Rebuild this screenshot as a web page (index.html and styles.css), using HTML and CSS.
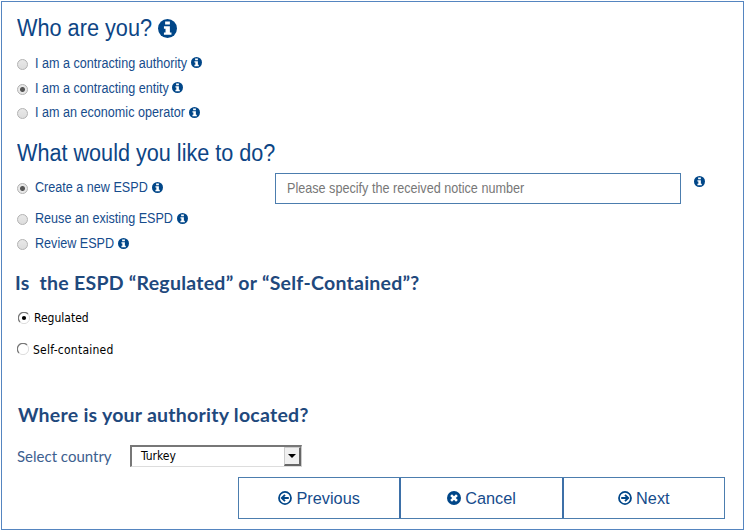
FILE: index.html
```html
<!DOCTYPE html>
<html lang="en">
<head>
<meta charset="utf-8">
<title>ESPD</title>
<link rel="stylesheet" href="styles.css">
</head>
<body>
<svg class="defs" width="0" height="0" aria-hidden="true">
  <symbol id="info" viewBox="0 0 24 24"><circle cx="12" cy="12" r="12" fill="#004688"/><path d="M9 3h6v4H9zM7.5 9.2H15v7.8h2v3H7.5v-3h2v-4.8h-2z" fill="#fff"/></symbol>
  <symbol id="arrow" viewBox="0 0 24 24"><circle cx="12" cy="12" r="10.3" fill="none" stroke="#004688" stroke-width="3"/><path d="M5.500 12h12M12 6.500L17.500 12 12 17.500" fill="none" stroke="#004688" stroke-width="3.200"/></symbol>
  <symbol id="cross" viewBox="0 0 24 24"><circle cx="12" cy="12" r="12" fill="#004688"/><path d="M7 7l10 10M17 7L7 17" stroke="#fff" stroke-width="4.400"/></symbol>
</svg>
<main class="frame">
  <h2 class="title title-who"><span class="text who">Who are you?</span><svg class="info-lg"><use href="#info"/></svg></h2>
  <div class="options">
    <label class="option"><i class="radio"></i><span class="text authority">I am a contracting authority</span><svg class="info"><use href="#info"/></svg></label>
    <label class="option"><i class="radio on"></i><span class="text entity">I am a contracting entity</span><svg class="info"><use href="#info"/></svg></label>
    <label class="option"><i class="radio"></i><span class="text operator">I am an economic operator</span><svg class="info"><use href="#info"/></svg></label>
  </div>
  <h2 class="title title-what"><span class="text what">What would you like to do?</span></h2>
  <div class="create-row">
    <label class="option"><i class="radio on"></i><span class="text create">Create a new ESPD</span><svg class="info"><use href="#info"/></svg></label>
    <div class="notice"><span class="text notice-text">Please specify the received notice number</span></div>
    <svg class="info notice-info"><use href="#info"/></svg>
  </div>
  <label class="option"><i class="radio"></i><span class="text reuse">Reuse an existing ESPD</span><svg class="info"><use href="#info"/></svg></label>
  <label class="option"><i class="radio"></i><span class="text review">Review ESPD</span><svg class="info"><use href="#info"/></svg></label>
  <h3 class="question regulated-q"><span class="text">Is&nbsp; the ESPD “Regulated” or “Self-Contained”?</span></h3>
  <label class="classic"><svg class="bevel" viewBox="0 0 12 12"><path d="M2 10A5.200 5.200 0 0 1 10 2" fill="none" stroke="#777" stroke-width="1.300"/><path d="M10 2A5.200 5.200 0 0 1 2 10" fill="none" stroke="#ddd"/><circle cx="6" cy="6" r="2.100" fill="#000"/></svg><span>Regulated</span></label>
  <label class="classic classic-self"><svg class="bevel" viewBox="0 0 12 12"><path d="M2 10A5.200 5.200 0 0 1 10 2" fill="none" stroke="#777" stroke-width="1.300"/><path d="M10 2A5.200 5.200 0 0 1 2 10" fill="none" stroke="#ddd"/></svg><span>Self-contained</span></label>
  <h3 class="question located-q"><span class="text">Where is your authority located?</span></h3>
  <div class="country">
    <span class="text country-label">Select country</span>
    <div class="select"><span class="value">Turkey</span><span class="drop"><i></i></span></div>
  </div>
  <div class="actions">
    <div class="button"><svg class="icon flip"><use href="#arrow"/></svg><span class="text previous">Previous</span></div>
    <div class="button"><svg class="icon"><use href="#cross"/></svg><span class="text cancel">Cancel</span></div>
    <div class="button"><svg class="icon"><use href="#arrow"/></svg><span class="text next">Next</span></div>
  </div>
</main>
</body>
</html>
```
FILE: styles.css
```css
* { box-sizing: border-box; }
body { margin: 0; background: #fff; font-family: "Liberation Sans", Arial, sans-serif; color: #164c8c; }
.defs { display: block; height: 0; }
svg { display: block; flex: none; }
h2, h3 { margin: 0; font-weight: 400; }
.frame { width: 743px; height: 529px; margin: 1px 0 0 1px; border: 1px solid #5585c0; padding-left: 15px; overflow: hidden; }
.text { white-space: pre; transform-origin: left center; flex: none; }
.title { display: flex; align-items: center; height: 28px; font-size: 23px; color: #0d4585; }
.title-who { margin-top: 12px; }
.title-what { margin-top: 14.5px; }
.who { width: 141px; transform: scaleX(.943); }
.what { transform: scaleX(.94); }
.info-lg { width: 19px; height: 19px; }
.options { margin-top: 8.5px; }
.option { display: flex; align-items: center; height: 24.7px; font-size: 14px; }
.option .text { transform: scaleX(.9); }
.radio { width: 11px; height: 11px; margin: 3px 7px 0 0; border: 1px solid #b2b2b2; border-radius: 50%; background: linear-gradient(#e8e8e8, #ddd); flex: none; }
.radio.on { background: radial-gradient(circle, #555 0 2px, #e8e8e8 3px); }
.info { width: 11px; height: 11px; }
.authority { width: 156px; }
.entity { width: 137px; }
.operator { width: 154px; }
.create { width: 117px; }
.reuse { width: 142px; }
.review { width: 83px; }
.create-row { display: flex; height: 33px; margin-top: 6px; align-items: flex-start; }
.create-row .option { width: 258px; height: 28px; }
.notice { width: 406px; height: 31px; border: 1px solid #4c7dae; color: #777; font-size: 14.3px; padding-left: 11px; line-height: 28px; }
.notice-text { display: block; transform: scaleX(.883); }
.notice-info { margin: 3px 0 0 13px; }
.question { display: flex; align-items: center; height: 26px; font-family: Lato, sans-serif; font-size: 19.5px; letter-spacing: .25px; font-weight: 700; color: #1f497d; }
.regulated-q { margin: 14px 0 0 -2px; }
.located-q { margin: 42px 0 0 1px; }
.classic { display: flex; align-items: center; height: 18px; margin-top: 14px; color: #000; font-family: "DejaVu Sans Condensed", "DejaVu Sans", sans-serif; font-size: 12px; }
.classic-self { margin-top: 14px; letter-spacing: .25px; }
.bevel { width: 12px; height: 12px; margin-right: 4px; margin-left: 1px; }
.classic-self .bevel { margin: -3px 4px 0 0; }
.country { display: flex; align-items: center; height: 22px; margin-top: 18px; }
.country-label { width: 113px; font: 15px Lato, sans-serif; color: #3d608f; }
.select { display: flex; width: 172px; height: 22px; border: 2px solid #777; border-right: 1px solid #ccc; border-bottom: 1px solid #ddd; color: #000; }
.value { flex: 1; padding-left: 9px; font: 12px/19px "DejaVu Sans Condensed", sans-serif; }
.drop { display: flex; align-items: center; justify-content: center; width: 17px; background: #f0f0f0; border: 1px solid #ccc; border-right: 2px solid #666; border-bottom: 2px solid #666; }
.drop i { border: 4px solid transparent; border-top-color: #000; border-bottom: 0; }
.actions { display: flex; width: 487px; height: 42px; margin: 10px 0 0 221px; border: 1px solid #4c7dae; }
.button { display: flex; align-items: center; justify-content: center; flex: 1; font-size: 16.3px; }
.button + .button { border-left: 2px solid #3d70a8; }
.icon { width: 14px; height: 14px; margin-right: 4px; }
.flip { transform: scaleX(-1); }
```
